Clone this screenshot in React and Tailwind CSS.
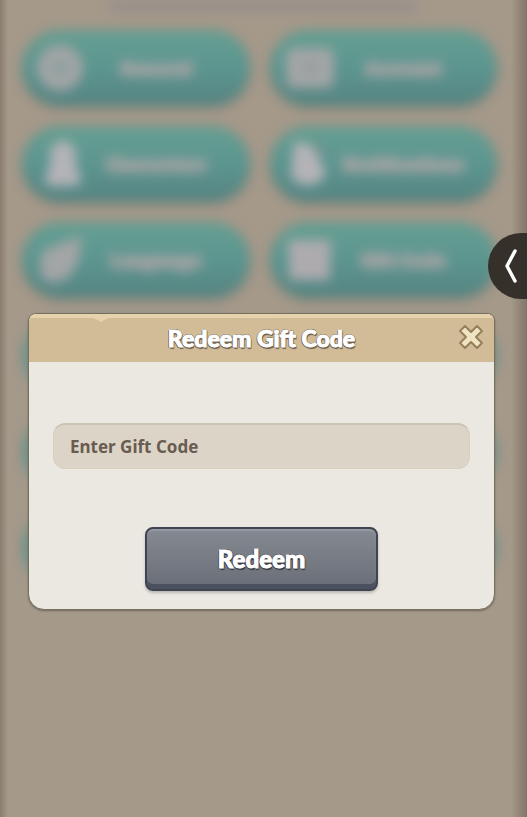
import React from 'react';

function MenuIcon({ name }) {
  const shapes = {
    gear: (
      <>
        <circle cx="22" cy="24" r="16" fill="none" stroke="currentColor" strokeWidth="14" />
        <circle cx="22" cy="24" r="9" fill="currentColor" opacity="0.7" />
      </>
    ),
    card: (
      <>
        <rect x="0" y="4" width="48" height="40" rx="8" fill="currentColor" />
        <circle cx="24" cy="24" r="4" fill="#7d918f" />
      </>
    ),
    person: (
      <>
        <circle cx="25" cy="14" r="13" fill="#b4b3b8" />
        <path d="M14 18h22l7 22c0 4-4 6-8 6H14c-5 0-8-3-7-7z" fill="#b4b3b8" />
      </>
    ),
    bell: (
      <>
        <path d="M8 3c12-3 19 2 23 12l8 16c2 6-5 12-14 14-9 1-19-3-20-9z" fill="#b4b3b8" />
        <path d="M30 6c5 2 8 6 9 12" fill="none" stroke="#8b8a90" strokeWidth="4" />
      </>
    ),
    flag: <path d="M3 16 26 6l18-6-4 28-12 16-18 3-8-9z" fill="currentColor" />,
    gift: (
      <>
        <rect x="2" y="4" width="43" height="14" rx="3" fill="#aeabaf" />
        <rect x="3" y="16" width="41" height="28" rx="3" fill="#aeabaf" />
      </>
    ),
  };

  return (
    <svg viewBox="0 0 48 48" className="size-12 shrink-0 overflow-visible">
      {shapes[name]}
    </svg>
  );
}

function MenuButton({ icon, label }) {
  return (
    <button
      type="button"
      className="flex h-[76px] w-full items-center rounded-full bg-linear-to-b from-[#659f92] via-[#5c958f] to-[#558481] pl-4 pr-6 text-[#a3a5a6] shadow-[0_2px_5px_#7d7c72]"
    >
      <MenuIcon name={icon} />
      <span className="flex-1 text-center text-lg font-black [-webkit-text-stroke:3px_#9ca1a1] [paint-order:stroke_fill]">
        {label}
      </span>
    </button>
  );
}

function Menu() {
  const items = [
    { icon: 'gear', label: 'General' },
    { icon: 'card', label: 'Account' },
    { icon: 'person', label: 'Characters' },
    { icon: 'bell', label: 'Notifications' },
    { icon: 'flag', label: 'Language' },
    { icon: 'gift', label: 'Gift Code' },
  ];
  const covered = [0, 1, 2, 3, 4, 5];

  return (
    <div inert className="blur-[6px]">
      <div className="mx-auto h-3 w-7/12 bg-[#988f8b]" />
      <div className="grid grid-cols-2 gap-5 pl-[22px] pr-[30px] pt-[18px]">
        {items.map((item) => (
          <MenuButton key={item.label} icon={item.icon} label={item.label} />
        ))}
        {covered.map((slot) => (
          <div key={slot} className="h-[76px] rounded-full bg-[#6b938a]" />
        ))}
      </div>
    </div>
  );
}

function RedeemDialog() {
  return (
    <form
      role="dialog"
      aria-labelledby="redeem-title"
      className="overflow-hidden rounded-t-lg rounded-b-2xl border border-[#77705f] bg-[#ebe8e2] shadow-[0_1px_2px_#6f695d]"
    >
      <header className="relative flex h-12 items-center justify-center border-t-4 border-[#e6d3ac] bg-[#d2bc98] pb-1">
        <svg viewBox="0 0 16 4" className="absolute left-16 top-0 h-1 w-4">
          <path d="M0 0h16l-5 2-3 2-3-2z" fill="#e6d3ac" />
        </svg>
        <h1
          id="redeem-title"
          className="font-['Lato',sans-serif] text-[23px] leading-6 font-black text-white [-webkit-text-stroke:1px_#fff] [text-shadow:1px_0_#675c4d,-1px_0_#675c4d,0_-1px_#675c4d,0_1px_#675c4d,1px_2px_1px_#675c4d,-1px_1px_#675c4d]"
        >
          Redeem Gift Code
        </h1>
        <button type="button" aria-label="Close" className="absolute right-2 top-1">
          <svg viewBox="0 0 30 30" className="size-[30px]">
            <path
              d="M9 4l6 6 6-6 5 5-6 6 6 6-5 5-6-6-6 6-5-5 6-6-6-6z"
              fill="#f0e3c2"
              stroke="#94805a"
              strokeWidth="2"
              strokeLinejoin="round"
            />
          </svg>
        </button>
      </header>

      <div className="flex flex-col items-center px-6 pt-[61px] pb-[18px]">
        <input
          type="text"
          aria-label="Enter Gift Code"
          placeholder="Enter Gift Code"
          className="h-[46px] w-full rounded-xl border border-t-2 border-[#d8cfc1] border-t-[#cbc4b4] bg-[#dcd4c7] px-4 text-[17px] font-bold text-[#695c50] outline-none placeholder:text-[#695c50] placeholder:opacity-100"
        />
        <button
          type="submit"
          className="mt-[58px] h-16 w-[56%] rounded-lg border-2 border-[#3f4450] bg-linear-to-b from-[#858a92] to-[#686d77] font-['Lato',sans-serif] text-2xl font-black text-white shadow-[0_2px_3px_#b9b7b2,inset_0_2px_1px_#959aa1,inset_0_-5px_0_#4c5160] [-webkit-text-stroke:1px_#fff] [text-shadow:1px_0_#353941,-1px_0_#353941,0_-1px_#353941,0_1px_#353941,1px_2px_1px_#353941,-1px_1px_#353941]"
        >
          Redeem
        </button>
      </div>
    </form>
  );
}

function App() {
  return (
    <main className="relative min-h-screen overflow-hidden bg-[#a5998a] font-['Noto_Sans',sans-serif]">
      <Menu />
      <div className="absolute inset-y-0 left-0 w-2 bg-linear-to-r from-[#8a7e71] to-transparent" />
      <div className="absolute inset-y-0 right-0 w-4 bg-linear-to-l from-[#82766a] to-transparent" />

      <div className="absolute inset-x-0 top-[313px] pl-7 pr-8">
        <RedeemDialog />
      </div>

      <button
        type="button"
        aria-label="Open side panel"
        className="absolute right-0 top-[233px] flex h-[66px] w-[39px] items-center justify-end rounded-l-[33px] bg-[#36302b] pr-2"
      >
        <svg viewBox="0 0 16 36" className="h-9 w-4">
          <path
            d="M12 3 4 18l8 15"
            fill="none"
            stroke="#fff"
            strokeWidth="3.5"
            strokeLinecap="round"
            strokeLinejoin="round"
          />
        </svg>
      </button>
    </main>
  );
}

export default App;
